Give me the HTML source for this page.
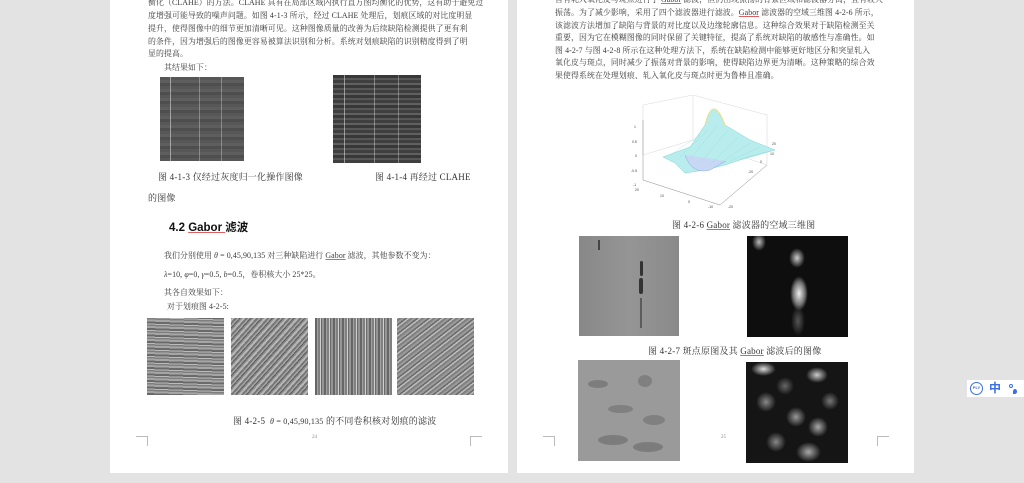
<!DOCTYPE html>
<html><head><meta charset="utf-8"><style>
*{margin:0;padding:0;box-sizing:border-box}
body{width:1024px;height:483px;background:#e3e3e3;position:relative;overflow:hidden;font-family:"Liberation Serif","Noto Serif CJK SC","Noto Sans CJK SC",serif;color:#333}
.page{position:absolute;background:#fff;top:0;height:473px}
.t{position:absolute;font-size:7.9px;white-space:nowrap;color:#3a3a3a;letter-spacing:0.1px}
.cap{position:absolute;font-size:9px;white-space:nowrap;color:#333;letter-spacing:0.2px}
.img{position:absolute;overflow:hidden}
.c{position:absolute;width:12px;height:10px;border-color:#bbb;border-style:solid}
.u{text-decoration:underline;text-decoration-color:#e06060}
.s{position:absolute;border-radius:50%}
</style></head><body>
<div class="page" style="left:110px;width:398px"></div>
<div class="page" style="left:517px;width:397px"></div>

<!-- left page text -->
<div class="t" style="left:148px;top:-3px">衡化（CLAHE）的方法。CLAHE 具有在局部区域内执行直方图均衡化的优势，这有助于避免过</div>
<div class="t" style="left:148px;top:10px">度增强可能导致的噪声问题。如图 4-1-3 所示，经过 CLAHE 处理后，划痕区域的对比度明显</div>
<div class="t" style="left:148px;top:23px">提升，使得图像中的细节更加清晰可见。这种图像质量的改善为后续缺陷检测提供了更有利</div>
<div class="t" style="left:148px;top:36px">的条件，因为增强后的图像更容易被算法识别和分析。系统对划痕缺陷的识别精度得到了明</div>
<div class="t" style="left:148px;top:48px">显的提高。</div>
<div class="t" style="left:164px;top:62px">其结果如下：</div>
<div class="img" style="left:160px;top:77px;width:84px;height:84px;background:linear-gradient(90deg,transparent 10px,rgba(255,255,255,.45) 10px 11px,transparent 11px 39px,rgba(255,255,255,.3) 39px 40px,transparent 40px 61px,rgba(255,255,255,.3) 61px 62px,transparent 62px),repeating-linear-gradient(0deg,#575757 0 3px,#4e4e4e 3px 6px,#5e5e5e 6px 9px),#555"></div>
<div class="img" style="left:333px;top:75px;width:88px;height:88px;background:linear-gradient(90deg,transparent 11px,rgba(255,255,255,.45) 11px 12px,transparent 12px 41px,rgba(255,255,255,.35) 41px 42px,transparent 42px 65px,rgba(255,255,255,.3) 65px 66px,transparent 66px),repeating-linear-gradient(0deg,#3f3f3f 0 3px,#575757 3px 5px,#383838 5px 8px,#606060 8px 10px),#4a4a4a"></div>
<div class="cap" style="left:158px;top:170px">图 4-1-3 仅经过灰度归一化操作图像</div>
<div class="cap" style="left:375px;top:170px">图 4-1-4 再经过 CLAHE</div>
<div class="cap" style="left:148px;top:191px">的图像</div>
<div style="position:absolute;left:169px;top:219px;font-family:'Liberation Sans','Noto Sans CJK SC',sans-serif;font-weight:bold;font-size:11.5px;color:#111">4.2 <span class="u">Gabor </span>滤波</div>
<div class="t" style="left:164px;top:250px">我们分别使用 <i>θ</i> = 0,45,90,135 对三种缺陷进行 <span class="u">Gabor</span> 滤波，其他参数不变为：</div>
<div class="t" style="left:164px;top:269px"><i>λ</i>=10, <i>φ</i>=0, <i>γ</i>=0.5, <i>b</i>=0.5，卷积核大小 25*25。</div>
<div class="t" style="left:164px;top:287px">其各自效果如下：</div>
<div class="t" style="left:167px;top:301px">对于划痕图 4-2-5:</div>
<div class="img" style="left:147px;top:318px;width:77px;height:77px;background:repeating-linear-gradient(2deg,#6a6a6a 0 2px,#a5a5a5 2px 4px,#7e7e7e 4px 5.5px,#bbb 5.5px 6.5px)"></div>
<div class="img" style="left:231px;top:318px;width:77px;height:77px;background:repeating-linear-gradient(-48deg,#777 0 2px,#b8b8b8 2px 4px,#8a8a8a 4px 5.5px,#5a5a5a 5.5px 6.5px,#a5a5a5 6.5px 8px)"></div>
<div class="img" style="left:315px;top:318px;width:77px;height:77px;background:repeating-linear-gradient(90deg,#666 0 2px,#a0a0a0 2px 3px,#808080 3px 5px,#d0d0d0 5px 6px,#6a6a6a 6px 7px,#959595 7px 9px)"></div>
<div class="img" style="left:397px;top:318px;width:77px;height:77px;background:repeating-linear-gradient(-38deg,#808080 0 2px,#bdbdbd 2px 3.5px,#6a6a6a 3.5px 5px,#9a9a9a 5px 7px)"></div>
<div class="cap" style="left:233px;top:414px">图 4-2-5 &nbsp;<i style="font-size:8px">θ</i><span style="font-size:8px"> = 0,45,90,135</span> 的不同卷积核对划痕的滤波</div>
<div style="position:absolute;left:312px;top:435px;font-size:5px;color:#888">24</div>
<div class="c" style="left:136px;top:436px;border-width:1px 1px 0 0"></div>
<div class="c" style="left:470px;top:436px;border-width:1px 0 0 1px"></div>

<!-- right page text -->
<div class="t" style="left:555px;top:-6px">含有轧入氧化皮与斑点进行了 <span class="u">Gabor</span> 滤波，但仍出现振荡的背景区域和滤波器分离，且有较大</div>
<div class="t" style="left:555px;top:7px">振荡。为了减少影响，采用了四个滤波器进行滤波。<span class="u">Gabor</span> 滤波器的空域三维图 4-2-6 所示，</div>
<div class="t" style="left:555px;top:20px">该滤波方法增加了缺陷与背景的对比度以及边缘轮廓信息。这种综合效果对于缺陷检测至关</div>
<div class="t" style="left:555px;top:32px">重要，因为它在模糊图像的同时保留了关键特征，提高了系统对缺陷的敏感性与准确性。如</div>
<div class="t" style="left:555px;top:45px">图 4-2-7 与图 4-2-8 所示在这种处理方法下，系统在缺陷检测中能够更好地区分和突显轧入</div>
<div class="t" style="left:555px;top:57px">氧化皮与斑点，同时减少了振荡对背景的影响，使得缺陷边界更为清晰。这种策略的综合效</div>
<div class="t" style="left:555px;top:70px">果使得系统在处理划痕、轧入氧化皮与斑点时更为鲁棒且准确。</div>

<svg style="position:absolute;left:630px;top:95px" width="150" height="115" viewBox="0 0 150 115">
<g stroke="#ddd" stroke-width="0.6" fill="none">
<path d="M13 60 L13 10 L63 0 L137 20 L137 70"/><path d="M13 60 L63 45 L137 70"/><path d="M63 0 L63 45"/>
</g>
<g stroke="#888" stroke-width="0.5" fill="none"><path d="M13 25 L13 85 L90 110 L137 70"/></g>
<g font-family="Liberation Sans" font-size="3.5" fill="#444">
<text x="4" y="33">1</text><text x="2" y="48">0.5</text><text x="5" y="62">0</text><text x="1" y="77">-0.5</text><text x="3" y="91">-1</text>
<text x="5" y="96">20</text><text x="30" y="102">10</text><text x="58" y="108">0</text><text x="78" y="113">-10</text><text x="98" y="113">-20</text>
<text x="118" y="78">-20</text><text x="130" y="68">0</text><text x="140" y="60">10</text><text x="142" y="50">20</text>
</g>
<path d="M33 62 L60 52 L75 30 Q83 -2 95 30 L120 45 L145 55 L110 65 L95 70 L75 75 L55 78 L45 68 Z" fill="#b9ecec" stroke="#7fd6d6" stroke-width="0.5"/>
<path d="M55 60 Q62 80 80 75 L96 66" fill="#c8d8f4" stroke="#8fa8e0" stroke-width="0.5"/>
<path d="M75 30 Q83 -2 95 30" fill="none" stroke="#eedf7a" stroke-width="1"/>
<g stroke="#8fdada" stroke-width="0.3"><path d="M40 60 L70 40 M50 62 L78 35 M60 64 L88 30 M70 68 L98 35 M80 70 L108 42 M90 68 L120 48 M100 66 L130 52 M110 64 L140 56"/></g>
</svg>
<div class="cap" style="left:672px;top:218px">图 4-2-6 <span class="u">Gabor</span> 滤波器的空域三维图</div>
<div class="img" style="left:579px;top:236px;width:100px;height:100px;background:linear-gradient(90deg,#888,#959595 50%,#8a8a8a)">
<div style="position:absolute;left:61px;top:25px;width:3px;height:15px;background:#333;border-radius:2px"></div>
<div style="position:absolute;left:60px;top:42px;width:4px;height:16px;background:#333;border-radius:2px"></div>
<div style="position:absolute;left:61px;top:62px;width:2px;height:30px;background:#444;opacity:.7"></div>
<div style="position:absolute;left:19px;top:4px;width:2px;height:10px;background:#444"></div></div>
<div class="img" style="left:747px;top:236px;width:101px;height:101px;background:#0e0e0e">
<div class="s" style="left:43px;top:40px;width:18px;height:35px;background:radial-gradient(ellipse,#eee,#777 45%,transparent 70%)"></div>
<div class="s" style="left:42px;top:12px;width:16px;height:20px;background:radial-gradient(#ccc,transparent 70%)"></div>
<div class="s" style="left:5px;top:-3px;width:14px;height:18px;background:radial-gradient(#bbb,transparent 70%)"></div>
<div class="s" style="left:44px;top:70px;width:14px;height:30px;background:radial-gradient(#555,transparent 70%)"></div></div>
<div class="cap" style="left:648px;top:344px">图 4-2-7 斑点原图及其 <span class="u">Gabor</span> 滤波后的图像</div>
<div class="img" style="left:578px;top:360px;width:102px;height:101px;background:#9a9a9a">
<div class="s" style="left:10px;top:20px;width:20px;height:8px;background:#6a6a6a;opacity:.6"></div>
<div class="s" style="left:60px;top:15px;width:14px;height:12px;background:#707070;opacity:.6"></div>
<div class="s" style="left:30px;top:45px;width:25px;height:8px;background:#666;opacity:.5"></div>
<div class="s" style="left:65px;top:55px;width:22px;height:10px;background:#666;opacity:.5"></div>
<div class="s" style="left:20px;top:75px;width:30px;height:10px;background:#5e5e5e;opacity:.5"></div>
<div class="s" style="left:55px;top:82px;width:30px;height:10px;background:#5e5e5e;opacity:.5"></div></div>
<div class="img" style="left:746px;top:362px;width:102px;height:101px;background:#151515">
<div class="s" style="left:5px;top:0;width:25px;height:14px;background:radial-gradient(#ddd,transparent 70%)"></div>
<div class="s" style="left:60px;top:5px;width:22px;height:16px;background:radial-gradient(#ccc,transparent 70%)"></div>
<div class="s" style="left:10px;top:30px;width:20px;height:20px;background:radial-gradient(#888,transparent 70%)"></div>
<div class="s" style="left:40px;top:45px;width:20px;height:20px;background:radial-gradient(#999,transparent 70%)"></div>
<div class="s" style="left:62px;top:55px;width:20px;height:20px;background:radial-gradient(#aaa,transparent 70%)"></div>
<div class="s" style="left:20px;top:70px;width:20px;height:20px;background:radial-gradient(#888,transparent 70%)"></div>
<div class="s" style="left:50px;top:80px;width:25px;height:20px;background:radial-gradient(#aaa,transparent 70%)"></div>
<div class="s" style="left:75px;top:30px;width:18px;height:18px;background:radial-gradient(#777,transparent 70%)"></div>
<div class="s" style="left:30px;top:15px;width:18px;height:18px;background:radial-gradient(#666,transparent 70%)"></div></div>
<div style="position:absolute;left:721px;top:435px;font-size:5px;color:#888">25</div>
<div class="c" style="left:543px;top:436px;border-width:1px 1px 0 0"></div>
<div class="c" style="left:877px;top:436px;border-width:1px 0 0 1px"></div>

<!-- floating widget -->
<div style="position:absolute;left:967px;top:380px;width:57px;height:17px;background:#fff"></div>
<div style="position:absolute;left:970px;top:382px;width:13px;height:13px;border:1.5px solid #3b6ee8;border-radius:50%;font-size:4px;color:#3b6ee8;text-align:center;line-height:10px;font-family:'Liberation Sans';font-weight:bold">PLY</div>
<div style="position:absolute;left:989px;top:381px;font-size:12px;font-weight:bold;color:#3b6ee8;font-family:'Noto Sans CJK SC',sans-serif;line-height:14px">中</div>
<div style="position:absolute;left:1009px;top:384px;width:4px;height:4px;border:1.3px solid #3b6ee8;border-radius:50%"></div>
<div style="position:absolute;left:1013px;top:389px;width:4px;height:5px;background:#3b6ee8;border-radius:50% 50% 50% 0"></div>
</body></html>
